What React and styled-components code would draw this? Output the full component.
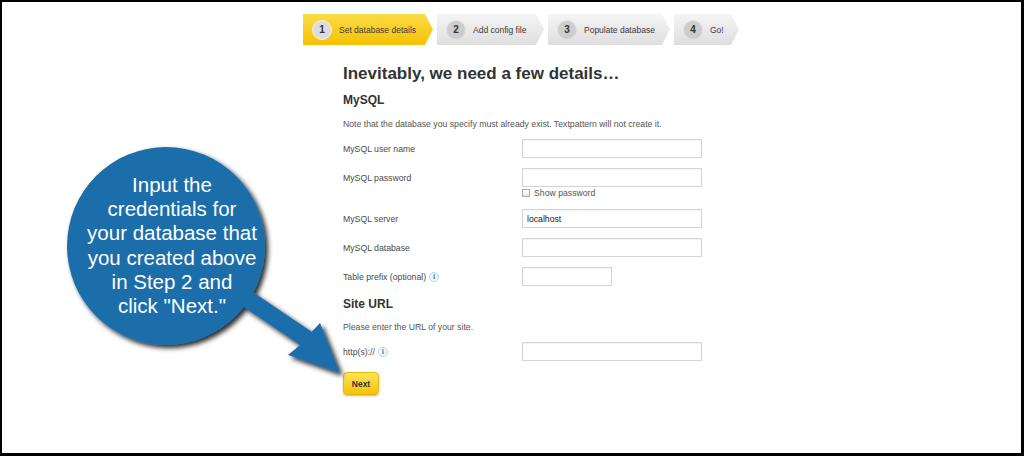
import React from "react";
import styled, { createGlobalStyle } from "styled-components";

const GlobalStyle = createGlobalStyle`
  html, body {
    margin: 0;
    padding: 0;
    background: #fff;
  }
  body {
    font-family: "Liberation Sans", Arial, sans-serif;
  }
`;

const Frame = styled.div`
  position: relative;
  box-sizing: border-box;
  width: 1024px;
  height: 456px;
  border-style: solid;
  border-color: #000;
  border-width: 2px 3px 3px 2px;
  padding-top: 12px;
  overflow: hidden;
  background: #fff;
`;

const Steps = styled.ol`
  display: flex;
  gap: 4px;
  list-style: none;
  margin: 0 0 0 301px;
  padding: 0;
`;

const Step = styled.li`
  display: flex;
  align-items: center;
  gap: 7px;
  box-sizing: border-box;
  width: ${(p) => p.$w}px;
  height: 31px;
  padding-left: 9px;
  clip-path: polygon(0 0, calc(100% - 8px) 0, 100% 50%, calc(100% - 8px) 100%, 0 100%);
  background: ${(p) =>
    p.$active
      ? "linear-gradient(#fbdb45, #f5c205)"
      : "linear-gradient(#f5f5f5, #dedede)"};
  color: #3a3a3a;
  font-size: 8.5px;
`;

const StepNum = styled.span`
  display: flex;
  align-items: center;
  justify-content: center;
  box-sizing: border-box;
  width: 20px;
  height: 20px;
  border-radius: 50%;
  background: ${(p) => (p.$active ? "#dcdcdc" : "#cdcdcd")};
  border: 1px solid ${(p) => (p.$active ? "#f0f0f0" : "#e2e2e2")};
  color: #333;
  font-weight: bold;
  font-size: 10px;
`;

const Main = styled.main`
  margin: 19px 0 0 341px;
  width: 360px;
  color: #444;
`;

const Title = styled.h1`
  margin: 0;
  font-size: 17px;
  line-height: 20px;
  font-weight: bold;
  color: #333;
`;

const Section = styled.h2`
  margin: ${(p) => p.$top}px 0 0;
  font-size: 12px;
  line-height: 14px;
  font-weight: bold;
  color: #333;
`;

const Note = styled.p`
  margin: 11px 0 9px;
  font-size: 8.7px;
  line-height: 12px;
  color: #555;
`;

const Fields = styled.div`
  display: flex;
  flex-direction: column;
  gap: 10px;
`;

const Row = styled.div`
  display: grid;
  grid-template-columns: 179px 180px;
  align-items: start;
`;

const Label = styled.label`
  display: flex;
  align-items: center;
  gap: 3px;
  height: 19px;
  font-size: 8.7px;
  color: #4a4a4a;
`;

const Input = styled.input`
  box-sizing: border-box;
  display: block;
  width: ${(p) => (p.$short ? 90 : 180)}px;
  height: 19px;
  margin: 0;
  padding: 0 4px;
  border: 1px solid #d4d4d4;
  box-shadow: inset 0 1px 1px rgba(0, 0, 0, 0.04);
  background: #fff;
  font-family: inherit;
  font-size: 8.7px;
  color: #222;
  outline: none;
`;

const ShowPass = styled.label`
  display: flex;
  align-items: center;
  gap: 4px;
  height: 12px;
  font-size: 8.7px;
  color: #555;
`;

const Check = styled.span`
  box-sizing: border-box;
  width: 8px;
  height: 8px;
  border: 1px solid #aaa;
  background: linear-gradient(#fff, #e6e6e6);
`;

const Info = styled.span`
  display: inline-flex;
  align-items: center;
  justify-content: center;
  box-sizing: border-box;
  width: 10px;
  height: 10px;
  border-radius: 50%;
  border: 1px solid #b7d3ee;
  background: #f1f7fd;
  color: #4b8fd0;
  font-size: 7px;
  font-weight: bold;
  font-family: "DejaVu Serif", serif;
`;

const NoteUrl = styled(Note)`
  margin: 10px 0 9px;
`;

const NextButton = styled.button`
  display: block;
  margin-top: 11px;
  box-sizing: border-box;
  width: 36px;
  height: 23px;
  padding: 0;
  border: 1px solid #e8b900;
  border-radius: 4px;
  background: linear-gradient(#fde459, #f6c306);
  box-shadow: 0 1px 2px rgba(0, 0, 0, 0.3);
  font-family: inherit;
  font-size: 8.5px;
  font-weight: bold;
  color: #333;
`;

const Callout = styled.div`
  position: absolute;
  top: -2px;
  left: -2px;
  width: 1024px;
  height: 456px;
  pointer-events: none;
`;

const CalloutText = styled.p`
  position: absolute;
  top: 173px;
  left: 72px;
  width: 200px;
  margin: 0;
  text-align: center;
  white-space: nowrap;
  color: #fff;
  font-size: 20.5px;
  line-height: 24.2px;
`;

const steps = [
  { n: 1, label: "Set database details", w: 130, active: true },
  { n: 2, label: "Add config file", w: 107 },
  { n: 3, label: "Populate database", w: 122 },
  { n: 4, label: "Go!", w: 65 },
];

const calloutLines = [
  "Input the",
  "credentials for",
  "your database that",
  "you created above",
  "in Step 2 and",
  'click "Next."',
];

const Field = ({ label, info, children }) => (
  <Row>
    <Label>
      {label}
      {info && <Info>i</Info>}
    </Label>
    <div>{children}</div>
  </Row>
);

export default function App() {
  return (
    <>
      <GlobalStyle />
      <Frame>
        <Steps>
          {steps.map((s) => (
            <Step key={s.n} $w={s.w} $active={s.active}>
              <StepNum $active={s.active}>{s.n}</StepNum>
              {s.label}
            </Step>
          ))}
        </Steps>

        <Main>
          <Title>Inevitably, we need a few details…</Title>
          <Section $top={9}>MySQL</Section>
          <Note>
            Note that the database you specify must already exist. Textpattern
            will not create it.
          </Note>
          <Fields>
            <Field label="MySQL user name">
              <Input />
            </Field>
            <Field label="MySQL password">
              <Input type="password" />
              <ShowPass>
                <Check />
                Show password
              </ShowPass>
            </Field>
            <Field label="MySQL server">
              <Input defaultValue="localhost" />
            </Field>
            <Field label="MySQL database">
              <Input />
            </Field>
            <Field label="Table prefix (optional)" info>
              <Input $short />
            </Field>
          </Fields>

          <Section $top={11}>Site URL</Section>
          <NoteUrl>Please enter the URL of your site.</NoteUrl>
          <Field label="http(s)://" info>
            <Input />
          </Field>
          <NextButton>Next</NextButton>
        </Main>

        <Callout>
          <svg width="1024" height="456" viewBox="0 0 1024 456">
            <defs>
              <filter id="shade" x="-20%" y="-20%" width="140%" height="140%">
                <feDropShadow dx="3" dy="3" stdDeviation="2.4" floodColor="#000" floodOpacity="0.85" />
              </filter>
            </defs>
            <g filter="url(#shade)" fill="#1b6eab">
              <polygon points="220,270 311.7,331.7 320,323 340,373 288,355 300,345 210,284" />
              <circle cx="166" cy="246" r="99" />
            </g>
          </svg>
          <CalloutText>
            {calloutLines.map((line, i) => (
              <React.Fragment key={i}>
                {line}
                {i < calloutLines.length - 1 && <br />}
              </React.Fragment>
            ))}
          </CalloutText>
        </Callout>
      </Frame>
    </>
  );
}
